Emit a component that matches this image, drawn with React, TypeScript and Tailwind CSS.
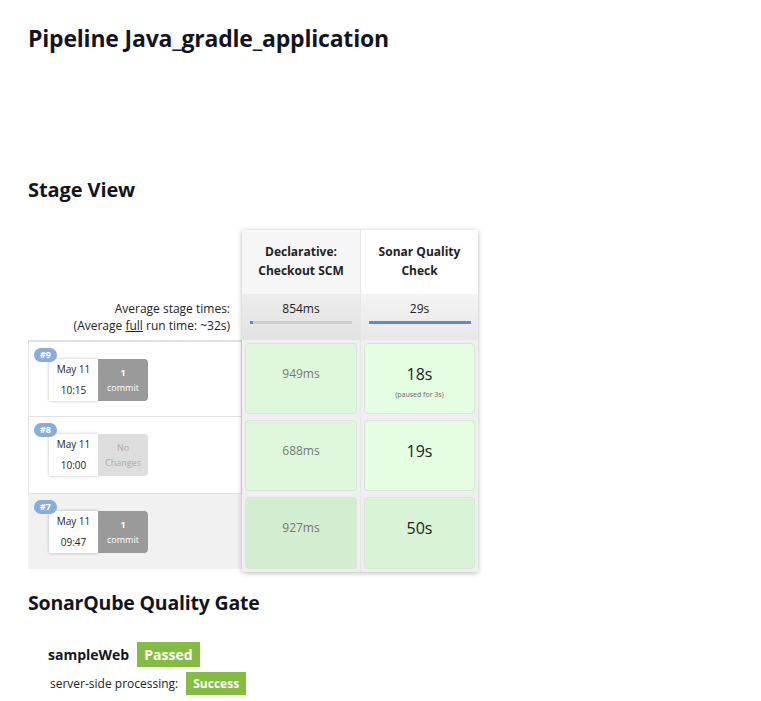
const font = { fontFamily: '"Open Sans", "Noto Sans", sans-serif' };

type Run = {
  id: string;
  date: string;
  time: string;
  changes: number;
  shaded?: boolean;
  cells: { a: string; b: string; note?: string };
};

const runs: Run[] = [
  { id: "#9", date: "May 11", time: "10:15", changes: 1, cells: { a: "949ms", b: "18s", note: "(paused for 3s)" } },
  { id: "#8", date: "May 11", time: "10:00", changes: 0, cells: { a: "688ms", b: "19s" } },
  { id: "#7", date: "May 11", time: "09:47", changes: 1, shaded: true, cells: { a: "927ms", b: "50s" } },
];

function RunLabel({ run }: { run: Run }) {
  return (
    <div className="relative pl-[20px] pt-[17px]">
      <span className="absolute left-[5px] top-[6px] rounded-full bg-[#8aadd6] px-[6px] text-[9px] leading-[14px] font-bold text-white">
        {run.id}
      </span>
      <div className="flex h-[42px] w-[99px]">
        <div className="flex w-[49px] flex-col items-center justify-center gap-[10px] bg-white text-[10px] leading-[11px] text-[#222] shadow-[0_0_3px_rgba(0,0,0,0.25)]">
          <span>{run.date}</span>
          <span>{run.time}</span>
        </div>
        {run.changes > 0 ? (
          <div className="flex w-[50px] flex-col items-center justify-center gap-[4px] rounded-r-[4px] bg-[#9a9a9a] text-[9px] leading-[11px] text-white">
            <span className="font-bold">{run.changes}</span>
            <span>commit</span>
          </div>
        ) : (
          <div className="flex w-[50px] flex-col items-center justify-center gap-[4px] rounded-r-[4px] bg-[#dedede] text-[9px] leading-[11px] text-[#aaa]">
            <span>No</span>
            <span>Changes</span>
          </div>
        )}
      </div>
    </div>
  );
}

function StageCell({ text, big, note, bg, h }: { text: string; big?: boolean; note?: string; bg: string; h: string }) {
  return (
    <div className={`p-[3px] ${h}`}>
      <div className={`flex h-full flex-col items-center rounded-[4px] border border-[#d6e8d3] pt-[19px] ${bg}`}>
        {big ? (
          <span className="text-[16px] leading-[22px] text-[#222]">{text}</span>
        ) : (
          <span className="text-[12px] leading-[22px] text-[#777]">{text}</span>
        )}
        {note && <span className="mt-[5px] text-[7px] text-[#666]">{note}</span>}
      </div>
    </div>
  );
}

export default function App() {
  return (
    <div className="min-h-[701px] bg-white pl-[28px] text-[#14141f]" style={font}>
      <h1 className="pt-[22px] text-[23px] leading-[32px] font-bold tracking-[-0.2px]">Pipeline Java_gradle_application</h1>

      <h2 className="mt-[123px] text-[20px] leading-[26px] font-bold tracking-[-0.1px]">Stage View</h2>

      <div className="mt-[27px] flex">
        <div className="flex w-[214px] flex-col">
          <div className="h-[64px]" />
          <div className="flex h-[46px] flex-col items-end justify-center pr-[12px] text-[12px] leading-[17px] text-[#222]">
            <span>Average stage times:</span>
            <span>
              (Average <span className="underline">full</span> run time: ~32s)
            </span>
          </div>
          <div className="h-[77px] border-x border-t-2 border-b border-[#e2e2e2] bg-white">
            <RunLabel run={runs[0]} />
          </div>
          <div className="h-[77px] border-x border-b border-[#e2e2e2] bg-white">
            <RunLabel run={runs[1]} />
          </div>
          <div className="h-[75px] border-x border-[#f2f2f2] bg-[#f1f1f1]">
            <RunLabel run={runs[2]} />
          </div>
        </div>

        <div className="flex h-[342px] shadow-[0_1px_5px_rgba(0,0,0,0.28)]">
          <div className="flex w-[118px] flex-col bg-[#efefef]">
            <div className="flex h-[64px] items-center justify-center bg-[#f6f6f6] pb-[2px] text-center text-[12px] leading-[19px] font-bold text-[#222]">
              Declarative:
              <br />
              Checkout SCM
            </div>
            <div className="flex h-[46px] flex-col items-center bg-gradient-to-b from-[#ececec] to-[#e2e2e2] pt-[7px] text-[12px] leading-[16px] text-[#222]">
              <span>854ms</span>
              <div className="mt-[4px] h-[3px] w-[102px] bg-[#cfcfcf]">
                <div className="h-full w-[3px] bg-[#5b8bd6]" />
              </div>
            </div>
            <StageCell text={runs[0].cells.a} bg="bg-[#dff7dc]" h="h-[77px]" />
            <StageCell text={runs[1].cells.a} bg="bg-[#dff7dc]" h="h-[77px]" />
            <StageCell text={runs[2].cells.a} bg="bg-[#d3edd1]" h="h-[78px]" />
          </div>
          <div className="w-px bg-[#e6e6e6]" />
          <div className="flex w-[117px] flex-col bg-[#efefef]">
            <div className="flex h-[64px] items-center justify-center bg-white pb-[2px] text-center text-[12px] leading-[19px] font-bold text-[#222]">
              Sonar Quality
              <br />
              Check
            </div>
            <div className="flex h-[46px] flex-col items-center bg-gradient-to-b from-[#f3f3f3] to-[#e8e8e8] pt-[7px] text-[12px] leading-[16px] text-[#222]">
              <span>29s</span>
              <div className="mt-[4px] h-[3px] w-[102px] bg-[#cfcfcf]">
                <div className="h-full w-full bg-[#5b8bd6]" />
              </div>
            </div>
            <StageCell text={runs[0].cells.b} note={runs[0].cells.note} big bg="bg-[#e5fde2]" h="h-[77px]" />
            <StageCell text={runs[1].cells.b} big bg="bg-[#e5fde2]" h="h-[77px]" />
            <StageCell text={runs[2].cells.b} big bg="bg-[#d9f3d6]" h="h-[78px]" />
          </div>
        </div>
      </div>

      <h2 className="mt-[18px] text-[19.5px] leading-[26px] font-bold tracking-[-0.2px]">SonarQube Quality Gate</h2>

      <div className="mt-[26px] flex items-center pl-[20px]">
        <span className="text-[14px] font-bold text-[#14141f]">sampleWeb</span>
        <span className="ml-[8px] bg-[#84bc43] px-[7px] text-[14px] leading-[25px] font-bold text-white">Passed</span>
      </div>
      <div className="mt-[5px] flex items-center pl-[22px]">
        <span className="text-[12px] text-[#222]">server-side processing:</span>
        <span className="ml-[8px] bg-[#84bc43] px-[7px] text-[12px] leading-[23px] font-bold text-white">Success</span>
      </div>
    </div>
  );
}
